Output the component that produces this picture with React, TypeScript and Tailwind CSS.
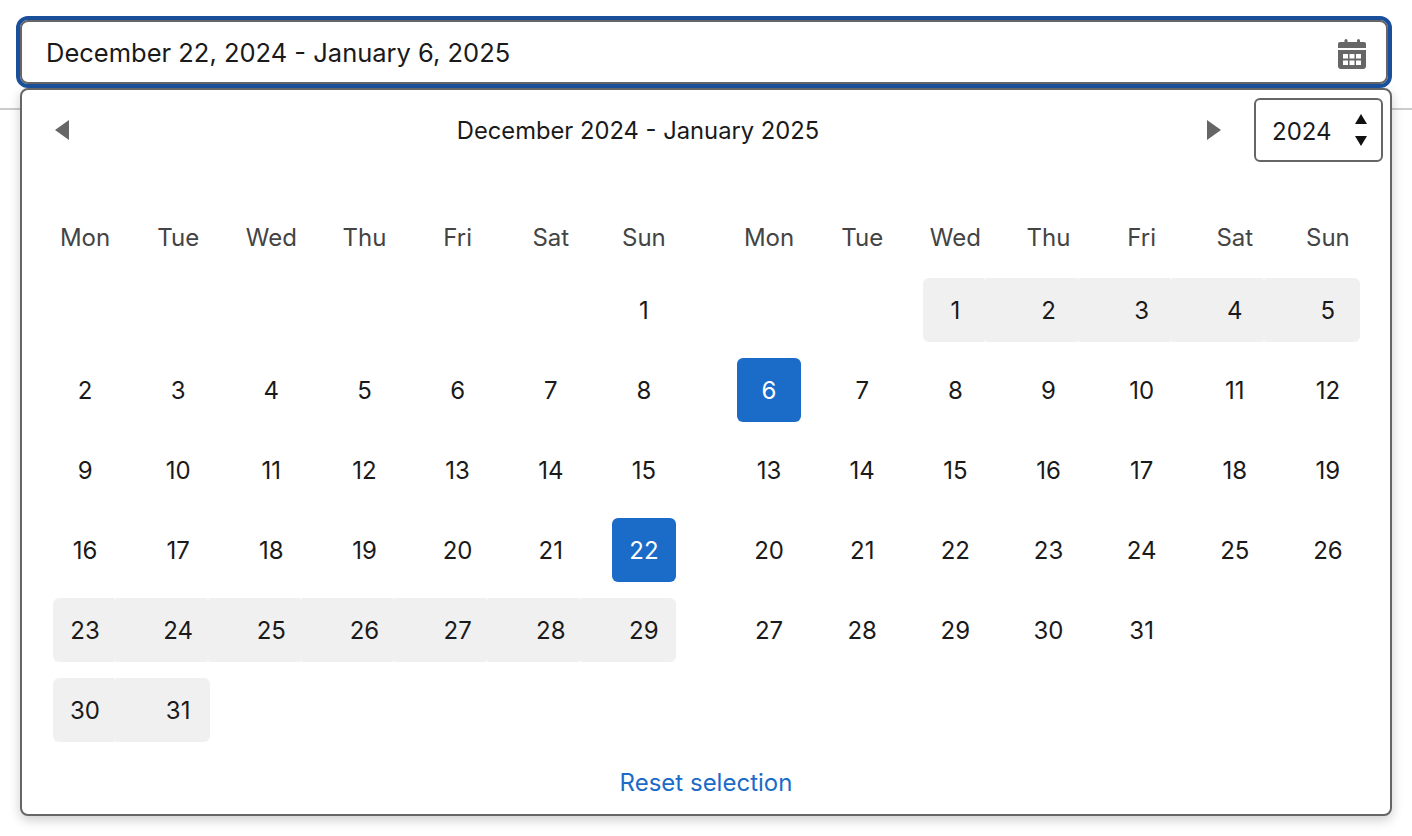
const font = "font-['Inter','Liberation_Sans',sans-serif]";
const weekdays = ["Mon", "Tue", "Wed", "Thu", "Fri", "Sat", "Sun"];

type Kind = "plain" | "start" | "end" | "mid" | "first" | "last" | "empty";

function Day({ n, kind }: { n?: number; kind: Kind }) {
  if (kind === "empty") return <div className="h-16" />;
  if (kind === "start" || kind === "end") {
    return (
      <div className="flex h-16 justify-center">
        <div className="flex h-16 w-16 items-center justify-center rounded-md bg-[#1b6bc8] pt-0.5 text-white">{n}</div>
      </div>
    );
  }
  if (kind === "first") {
    return <div className="ml-[14.5px] flex h-16 w-[62px] items-center justify-center rounded-l-md rounded-r-[2px] bg-[#f0f0f0] pl-[2px] pt-0.5">{n}</div>;
  }
  if (kind === "mid") {
    return <div className="-ml-[17px] mr-[17px] flex h-16 items-center justify-center rounded-[2px] bg-[#f0f0f0] pl-[34px] pt-0.5">{n}</div>;
  }
  if (kind === "last") {
    return <div className="-ml-[17px] flex h-16 w-[95.5px] items-center justify-center rounded-l-[2px] rounded-r-md bg-[#f0f0f0] pl-[31.5px] pt-0.5">{n}</div>;
  }
  return <div className="flex h-16 items-center justify-center pt-0.5">{n}</div>;
}

function Month({ offset, length, kindOf }: { offset: number; length: number; kindOf: (d: number) => Kind }) {
  const blanks = Array.from({ length: offset });
  const days = Array.from({ length }, (_, i) => i + 1);
  return (
    <div className="w-[652px]">
      <div className="grid h-[62px] grid-cols-7 items-center text-[#444444]">
        {weekdays.map((w) => (
          <div key={w} className="text-center">{w}</div>
        ))}
      </div>
      <div className="mt-[9px] grid grid-cols-7 gap-y-4 text-[#1a1a1a]">
        {blanks.map((_, i) => (
          <Day key={i} kind="empty" />
        ))}
        {days.map((d) => (
          <Day key={d} n={d} kind={kindOf(d)} />
        ))}
      </div>
    </div>
  );
}

const decKind = (d: number): Kind => {
  if (d === 22) return "start";
  if (d === 23 || d === 30) return "first";
  if (d === 29 || d === 31) return "last";
  if (d > 22) return "mid";
  return "plain";
};

const janKind = (d: number): Kind => {
  if (d === 1) return "first";
  if (d === 5) return "last";
  if (d < 5) return "mid";
  if (d === 6) return "end";
  return "plain";
};

export default function App() {
  return (
    <div className={`${font} relative h-[836px] w-[1412px] overflow-hidden bg-white text-2xl leading-none`}>
      {/* divider behind the popup */}
      <div className="absolute left-0 right-0 top-[108px] h-0.5 bg-[#cccccc]" />

      <div className="relative px-5 pt-5">
        <div className="flex h-16 w-[1368px] items-center justify-between rounded-lg border-2 border-[#666666] bg-white pl-[24px] pr-[20px] text-[#1a1a1a] outline-4 outline-[#1a4f9c]">
          <span className="whitespace-nowrap pt-0.5 text-[25.5px]">December 22, 2024 - January 6, 2025</span>
          <svg className="mt-[4px]" width="28" height="30" viewBox="0 0 28 30" fill="#666666">
            <rect x="6.5" y="0" width="3" height="6" rx="1.5" />
            <rect x="19" y="0" width="3" height="6" rx="1.5" />
            <path d="M2 3h24a2 2 0 0 1 2 2v4H0V5a2 2 0 0 1 2-2z" />
            <path d="M0 11h28v16a3 3 0 0 1-3 3H3a3 3 0 0 1-3-3z" />
            <g fill="#ffffff">
              <rect x="5" y="15" width="5" height="4.5" />
              <rect x="11.5" y="15" width="5" height="4.5" />
              <rect x="18" y="15" width="5" height="4.5" />
              <rect x="5" y="21.5" width="5" height="4.5" />
              <rect x="11.5" y="21.5" width="5" height="4.5" />
              <rect x="18" y="21.5" width="5" height="4.5" />
            </g>
          </svg>
        </div>

        <div className="mt-1 h-[728px] w-[1372px] rounded-lg border-2 border-[#666666] bg-white shadow-[0_4px_12px_rgba(0,0,0,0.2)]">
          <div className="flex items-center pl-[33px] pr-[7px] pt-2">
            <svg width="14" height="20" viewBox="0 0 14 20" fill="#666666">
              <path d="M14 0v20L0 10z" />
            </svg>
            <div className="flex-1 whitespace-nowrap pt-0.5 text-center text-[23.75px] text-[#1a1a1a]">December 2024 - January 2025</div>
            <svg width="14" height="20" viewBox="0 0 14 20" fill="#666666">
              <path d="M0 0v20l14-10z" />
            </svg>
            <div className="ml-[33px] flex h-16 w-[129px] items-center justify-between rounded-md border-2 border-[#666666] pl-4 pr-[13px] text-[#1a1a1a]">
              <span className="pt-1">2024</span>
              <svg width="14" height="32" viewBox="0 0 14 32" fill="#111111">
                <path d="M7 0l6 10H1z" />
                <path d="M1 22h12L7 32z" />
              </svg>
            </div>
          </div>
          <div className="mt-[45px] flex justify-between pl-[16.5px] pr-[15.5px]">
            <Month offset={6} length={31} kindOf={decKind} />
            <Month offset={2} length={31} kindOf={janKind} />
          </div>
          <div className="mt-[29px] text-center text-[#1b6bc8]">Reset selection</div>
        </div>
      </div>
    </div>
  );
}
